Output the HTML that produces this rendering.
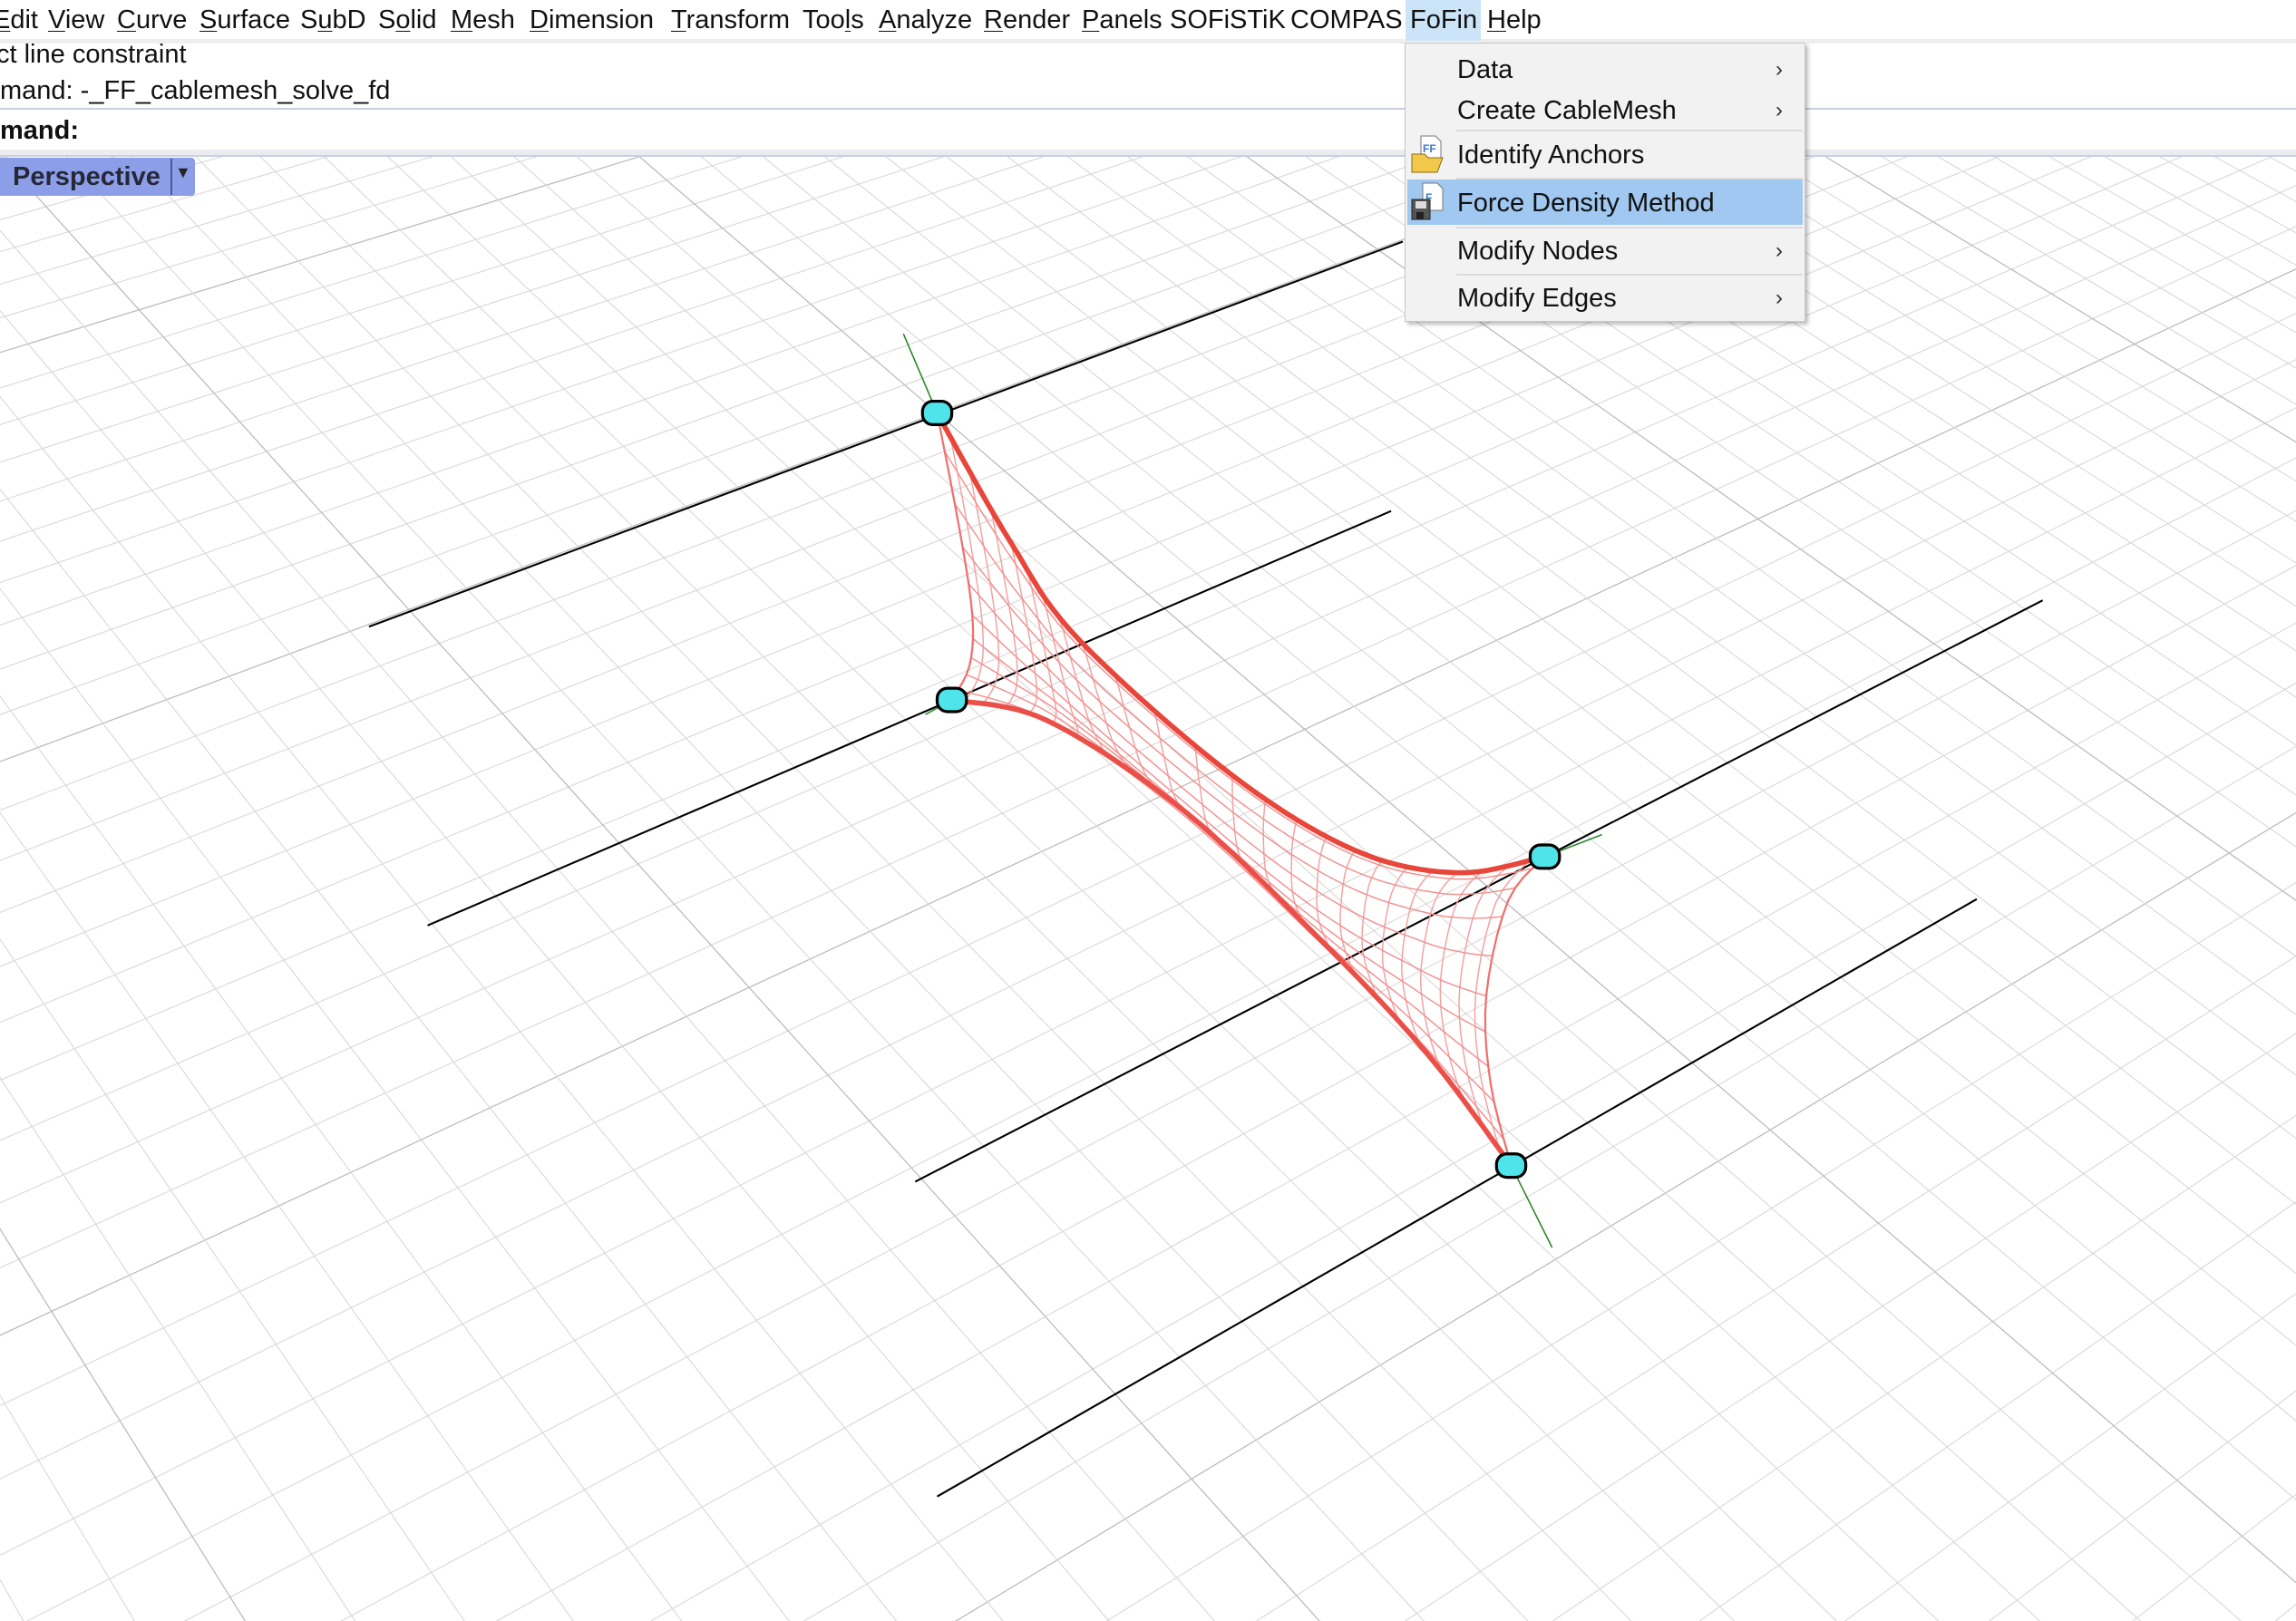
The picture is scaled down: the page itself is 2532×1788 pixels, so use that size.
<!DOCTYPE html>
<html><head><meta charset="utf-8">
<style>
html,body{margin:0;padding:0;width:2532px;height:1788px;overflow:hidden;background:#fff;font-family:"Liberation Sans",sans-serif;}
.abs{position:absolute;white-space:nowrap;}
.mb{position:absolute;top:4px;font-size:29px;color:#111;line-height:36px;}
.mb u{text-decoration:underline;text-underline-offset:3px;text-decoration-thickness:1px;}
.cmd{font-size:29px;color:#111;line-height:36px;}
#menu{position:absolute;left:1549px;top:47px;width:440px;height:306px;background:#f2f2f2;border:1px solid #c6c6c6;box-shadow:3px 3px 4px rgba(0,0,0,0.25);}
.it{position:absolute;left:0;width:440px;height:52px;font-size:29px;color:#111;line-height:52px;}
.it span.t{position:absolute;left:57px;}
.it span.a{position:absolute;left:408px;font-size:24px;color:#333;}
.sep{position:absolute;left:56px;width:382px;height:2px;background:#dcdcdc;}
</style></head><body>
<svg id="vp" class="abs" style="left:0;top:0" width="2532" height="1788" viewBox="0 0 1568 1107" preserveAspectRatio="none">
<defs><clipPath id="c"><rect x="0" y="107" width="1568" height="1000"/></clipPath></defs>
<g id="grid" clip-path="url(#c)" stroke="#d9d9d9" stroke-width="0.7" fill="none"></g>
<g clip-path="url(#c)" stroke="#000" stroke-width="1.3">
<line x1="252" y1="428" x2="958" y2="165"/>
<line x1="292" y1="632" x2="950" y2="349"/>
<line x1="625" y1="807" x2="1395" y2="410"/>
<line x1="640" y1="1022" x2="1350" y2="614"/>
</g>
<g id="mesh" fill="none"></g>
<g stroke="#2a8a2a" stroke-width="1">
<line x1="640" y1="282" x2="617" y2="228"/>
<line x1="1032" y1="796" x2="1060" y2="852"/>
<line x1="650" y1="478" x2="632" y2="488"/>
<line x1="1055" y1="585" x2="1094" y2="570"/>
</g>
<g fill="#4fe3ea" stroke="#000" stroke-width="2">
<rect x="630" y="274" width="20" height="16" rx="7"/>
<rect x="640" y="470" width="20" height="16" rx="7"/>
<rect x="1045" y="577" width="20" height="16" rx="7"/>
<rect x="1022" y="788" width="20" height="16" rx="7"/>
</g>
</svg>

<div class="abs" style="left:0;top:43px;width:2532px;height:5px;background:#eeeeee"></div>
<div class="abs" style="left:1550px;top:0;width:83px;height:45px;background:#cce4f7"></div>
<div class="mb" style="left:-8px"><u>E</u>dit</div>
<div class="mb" style="left:53px"><u>V</u>iew</div>
<div class="mb" style="left:129px"><u>C</u>urve</div>
<div class="mb" style="left:220px"><u>S</u>urface</div>
<div class="mb" style="left:331px">S<u>u</u>bD</div>
<div class="mb" style="left:417px">S<u>o</u>lid</div>
<div class="mb" style="left:497px"><u>M</u>esh</div>
<div class="mb" style="left:584px"><u>D</u>imension</div>
<div class="mb" style="left:740px"><u>T</u>ransform</div>
<div class="mb" style="left:885px">Too<u>l</u>s</div>
<div class="mb" style="left:969px"><u>A</u>nalyze</div>
<div class="mb" style="left:1085px"><u>R</u>ender</div>
<div class="mb" style="left:1193px"><u>P</u>anels</div>
<div class="mb" style="left:1290px">SOFiSTiK</div>
<div class="mb" style="left:1423px">COMPAS</div>
<div class="mb" style="left:1555px">FoFin</div>
<div class="mb" style="left:1640px"><u>H</u>elp</div>

<div class="abs cmd" style="left:-4px;top:42px">ct line constraint</div>
<div class="abs cmd" style="left:0;top:82px">mand: -_FF_cablemesh_solve_fd</div>
<div class="abs" style="left:0;top:119px;width:2532px;height:2px;background:#c9cfdc"></div>
<div class="abs cmd" style="left:0;top:126px;font-weight:bold">mand:</div>
<div class="abs" style="left:0;top:165px;width:2532px;height:6px;background:#ececf0;border-bottom:2px solid #c8d0e2"></div>

<div class="abs" style="left:0;top:174px;width:215px;height:42px;background:#8c9ee8;border-radius:0 4px 4px 0"></div>
<div class="abs" style="left:14px;top:177px;font-size:29px;font-weight:bold;color:#262838;line-height:36px">Perspective</div>
<div class="abs" style="left:188px;top:175px;width:2px;height:40px;background:#4a5a9a"></div>
<div class="abs" style="left:193px;top:180px;font-size:18px;color:#222">▼</div>

<div id="menu">
 <div class="it" style="top:3px"><span class="t">Data</span><span class="a">›</span></div>
 <div class="it" style="top:48px"><span class="t">Create CableMesh</span><span class="a">›</span></div>
 <div class="sep" style="top:95px"></div>
 <div class="it" style="top:97px"><span class="t">Identify Anchors</span></div>
 <div class="sep" style="top:148px"></div>
 <div class="abs" style="left:2px;top:150px;width:436px;height:50px;background:#a0c8f0"></div>
 <div class="it" style="top:150px"><span class="t">Force Density Method</span></div>
 <div class="sep" style="top:202px"></div>
 <div class="it" style="top:203px"><span class="t">Modify Nodes</span><span class="a">›</span></div>
 <div class="sep" style="top:254px"></div>
 <div class="it" style="top:255px"><span class="t">Modify Edges</span><span class="a">›</span></div>
 <svg class="abs" style="left:5px;top:100px" width="38" height="44" viewBox="0 0 38 44">
  <path d="M12 2h16l6 6v24H12z" fill="#fff" stroke="#777"/>
  <text x="14" y="20" font-size="12" fill="#3a7ad0" font-family="Liberation Sans" font-weight="bold">FF</text>
  <path d="M2 22h14l4 4h16l-6 16H2z" fill="#f2c84a" stroke="#8a6a10"/>
 </svg>
 <svg class="abs" style="left:5px;top:152px" width="38" height="44" viewBox="0 0 38 44">
  <path d="M14 2h16l6 6v24H14z" fill="#fff" stroke="#777"/>
  <text x="17" y="22" font-size="12" fill="#3a7ad0" font-family="Liberation Sans" font-weight="bold">F</text>
  <rect x="2" y="20" width="20" height="22" fill="#555" stroke="#222"/>
  <rect x="6" y="22" width="12" height="8" fill="#ddd"/>
  <rect x="7" y="34" width="8" height="8" fill="#222"/>
 </svg>
</div>

<script>
(function(){
var NS="http://www.w3.org/2000/svg";
var g=document.getElementById("grid");
function ln(par,x1,y1,x2,y2,st,w){var l=document.createElementNS(NS,"line");l.setAttribute("x1",x1);l.setAttribute("y1",y1);l.setAttribute("x2",x2);l.setAttribute("y2",y2);if(st){l.setAttribute("stroke",st);l.setAttribute("stroke-width",w);}par.appendChild(l);}
var VA=[4244,-1059],VB=[-1500,-1560],P0=[640,282];
var s=0.0105,t=0.0091;
function pt(V,k,sc){var d=1+k*sc;return [(P0[0]+k*sc*V[0])/d,(P0[1]+k*sc*V[1])/d];}
for(var k=-94;k<400;k++){
 if(1+k*s<=0.02)continue;
 var q=pt(VB,k,s);var e=[VA[0]+(q[0]-VA[0])*6,VA[1]+(q[1]-VA[1])*6];
 ln(g,VA[0],VA[1],e[0],e[1],k%10==0?"#bcbcbc":null,0.8);
}
for(var k=-109;k<400;k++){
 if(1+k*t<=0.02)continue;
 var q=pt(VA,k,t);var e=[VB[0]+(q[0]-VB[0])*6,VB[1]+(q[1]-VB[1])*6];
 ln(g,VB[0],VB[1],e[0],e[1],k%10==0?"#bcbcbc":null,0.8);
}
var m=document.getElementById("mesh");
function cr(P){ // catmull-rom through points, u in [0,1]
 return function(u){var n=P.length-1;var f=u*n;var i=Math.min(Math.floor(f),n-1);var tt=f-i;
  var p0=P[Math.max(i-1,0)],p1=P[i],p2=P[i+1],p3=P[Math.min(i+2,n)];
  var r=[];for(var d=0;d<2;d++){r.push(0.5*((2*p1[d])+(-p0[d]+p2[d])*tt+(2*p0[d]-5*p1[d]+4*p2[d]-p3[d])*tt*tt+(-p0[d]+3*p1[d]-3*p2[d]+p3[d])*tt*tt*tt));}return r;};}
var A=[640,282],B=[650,478],C=[1055,585],D=[1032,796];
var top=cr([A,[690,370],[737,437],[841,529],[926,581],[996,596],C]);
var bot=cr([B,[715,492],[809,554],[904,644],[975,720],D]);
var lef=cr([A,[655,360],[664,420],[662,455],B]);
var rig=cr([C,[1030,615],[1015,680],[1018,740],D]);
function S(u,v){
 var T=top(u),Bo=bot(u),L=lef(v),R=rig(v);var r=[];
 for(var d=0;d<2;d++)r.push((1-v)*T[d]+v*Bo[d]+(1-u)*L[d]+u*R[d]-((1-u)*(1-v)*A[d]+u*(1-v)*C[d]+(1-u)*v*B[d]+u*v*D[d]));
 return r;}
function poly(pts,col,w){var p=document.createElementNS(NS,"polyline");p.setAttribute("points",pts.map(function(a){return a[0].toFixed(1)+","+a[1].toFixed(1)}).join(" "));p.setAttribute("stroke",col);p.setAttribute("stroke-width",w);p.setAttribute("fill","none");m.appendChild(p);}
var N=24,M=10;
for(var i=1;i<N;i++){var pts=[];for(var j=0;j<=20;j++)pts.push(S(i/N,j/20));poly(pts,"#f4a0a0",0.9);}
for(var j=1;j<M;j++){var pts=[];for(var i=0;i<=60;i++)pts.push(S(i/60,j/M));poly(pts,"#f29090",0.9);}
var L=[],R=[],T=[],Bt=[];
for(var i=0;i<=60;i++){T.push(top(i/60));Bt.push(bot(i/60));}
for(var j=0;j<=20;j++){L.push(lef(j/20));R.push(rig(j/20));}
poly(L,"#f07070",1.4);poly(R,"#f07070",1.4);
poly(T,"#e8463a",3.5);poly(Bt,"#ea5048",3.5);
})();
</script>
</body></html>
